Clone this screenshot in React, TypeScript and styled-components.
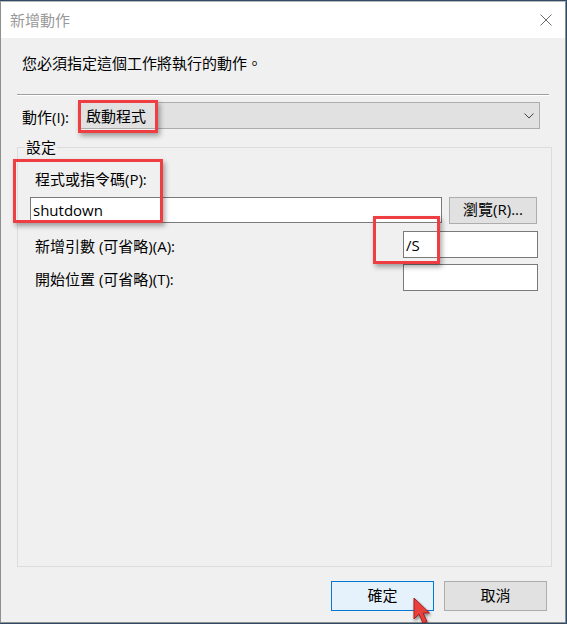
import React from "react";
import styled, { createGlobalStyle } from "styled-components";

const GlobalStyle = createGlobalStyle`
  html, body { margin: 0; padding: 0; background: #2d4b66; }
  body { font-family: "Open Sans", "Noto Sans CJK TC", sans-serif; }
  #root { padding-top: 1px; }
`;

const FONT = `"Open Sans", "Noto Sans CJK TC", sans-serif`;

const Window = styled.div`
  position: relative;
  width: 566px;
  height: 622px;
  box-sizing: border-box;
  border: 1px solid #8f8f8f;
  border-top-color: #b8b8b8;
  background: #f0f0f0;
  display: flex;
  flex-direction: column;
  font-family: ${FONT};
  font-size: 15px;
  line-height: 20px;
  color: #000;
`;

const TitleBar = styled.div`
  height: 36px;
  flex: none;
  background: #fff;
  display: flex;
  align-items: center;
  justify-content: space-between;
  padding: 0 13px 0 9px;
`;

const Title = styled.span`
  color: #999;
  font-size: 15px;
  padding-bottom: 1px;
`;

const Body = styled.div`
  flex: 1;
  min-height: 0;
  display: flex;
  flex-direction: column;
  padding: 15px 0 11px 16px;
`;

const Instruction = styled.div`
  margin-left: 5px;
`;

const Separator = styled.div`
  height: 0;
  border-top: 1px solid #a0a0a0;
  border-bottom: 1px solid #fff;
  margin: 21px 16px 0 0;
`;

const ActionRow = styled.div`
  display: flex;
  align-items: center;
  margin: 6px 25px 0 0;
`;

const ActionLabel = styled.span`
  width: 58px;
  margin-left: 5px;
  padding-top: 2px;
  flex: none;
`;

const ComboBox = styled.div`
  flex: 1;
  height: 27px;
  box-sizing: border-box;
  background: #e1e1e1;
  border: 1px solid #adadad;
  display: flex;
  align-items: center;
  justify-content: space-between;
  padding: 0 5px 0 5px;
`;

const Group = styled.fieldset`
  flex: 1;
  min-width: 0;
  margin: 8px 13px 0 0;
  padding: 0;
  border: 1px solid #dcdcdc;
  display: flex;
  flex-direction: column;
`;

const Legend = styled.legend`
  margin-left: 7px;
  padding: 0 1px;
  font-size: 15px;
  line-height: 20px;
`;

const GroupContent = styled.div`
  padding: 12px 13px 0 12px;
  display: flex;
  flex-direction: column;
`;

const FieldLabel = styled.span`
  margin-left: 5px;
`;

const PathRow = styled.div`
  display: flex;
  align-items: flex-start;
  gap: 7px;
  margin-top: 8px;
`;

const OptionRow = styled.div<{ $top: number }>`
  display: flex;
  align-items: center;
  margin-top: ${(p) => p.$top}px;
`;

const OptionLabel = styled.span`
  flex: 1;
  margin-left: 5px;
  padding-top: 2px;
`;

const TextBox = styled.input<{ $width?: number; $height: number }>`
  ${(p) => (p.$width ? `width: ${p.$width}px; flex: none;` : `flex: 1; min-width: 0;`)}
  height: ${(p) => p.$height}px;
  box-sizing: border-box;
  margin: 0;
  border: 1px solid #7a7a7a;
  background: #fff;
  padding: 0 2px;
  font-family: ${FONT};
  font-size: 15px;
  color: #000;
  outline: none;
`;

const Button = styled.button<{ $primary?: boolean; $width: number; $height: number }>`
  width: ${(p) => p.$width}px;
  height: ${(p) => p.$height}px;
  flex: none;
  box-sizing: border-box;
  margin: 0;
  padding: 0 0 3px;
  font-family: ${FONT};
  font-size: 15px;
  line-height: 20px;
  color: #000;
  background: ${(p) => (p.$primary ? "#e5f1fb" : "#e1e1e1")};
  border: 1px solid ${(p) => (p.$primary ? "#0078d7" : "#adadad")};
  border-radius: 0;
`;

const BrowseButton = styled(Button)`
  margin-right: 1px;
`;

const ButtonBar = styled.div`
  display: flex;
  justify-content: flex-end;
  gap: 10px;
  margin: 14px 18px 0 0;
`;

const Highlight = styled.div<{ $x: number; $y: number; $w: number; $h: number }>`
  position: absolute;
  left: ${(p) => p.$x}px;
  top: ${(p) => p.$y}px;
  width: ${(p) => p.$w}px;
  height: ${(p) => p.$h}px;
  box-sizing: border-box;
  border: 3px solid #ef3e42;
  box-shadow: 2px 3px 5px rgba(0, 0, 0, 0.35);
  pointer-events: none;
`;

const Cursor = styled.svg`
  position: absolute;
  left: 412px;
  top: 595px;
  filter: drop-shadow(1px 2px 1.5px rgba(0, 0, 0, 0.45));
`;

export default function App() {
  return (
    <>
      <GlobalStyle />
      <Window>
        <TitleBar>
          <Title>新增動作</Title>
          <svg width="12" height="12" viewBox="0 0 12 12">
            <path d="M0.5 0.5 L11.5 11.5 M11.5 0.5 L0.5 11.5" stroke="#6a6a6a" strokeWidth="1" fill="none" />
          </svg>
        </TitleBar>
        <Body>
          <Instruction>您必須指定這個工作將執行的動作。</Instruction>
          <Separator />
          <ActionRow>
            <ActionLabel>動作(I):</ActionLabel>
            <ComboBox>
              <span>啟動程式</span>
              <svg width="10" height="6" viewBox="0 0 10 6">
                <path d="M0.5 0.5 L5 5 L9.5 0.5" stroke="#444" strokeWidth="1" fill="none" />
              </svg>
            </ComboBox>
          </ActionRow>
          <Group>
            <Legend>設定</Legend>
            <GroupContent>
              <FieldLabel>程式或指令碼(P):</FieldLabel>
              <PathRow>
                <TextBox $height={26} defaultValue="shutdown" readOnly />
                <BrowseButton $width={88} $height={27}>瀏覽(R)...</BrowseButton>
              </PathRow>
              <OptionRow $top={7}>
                <OptionLabel>新增引數 (可省略)(A):</OptionLabel>
                <TextBox $width={135} $height={27} defaultValue="/S" readOnly />
              </OptionRow>
              <OptionRow $top={6}>
                <OptionLabel>開始位置 (可省略)(T):</OptionLabel>
                <TextBox $width={135} $height={27} defaultValue="" readOnly />
              </OptionRow>
            </GroupContent>
          </Group>
          <ButtonBar>
            <Button $primary $width={103} $height={30}>確定</Button>
            <Button $width={103} $height={30}>取消</Button>
          </ButtonBar>
        </Body>
        <Highlight $x={77} $y={98} $w={80} $h={33} />
        <Highlight $x={12} $y={157} $w={150} $h={64} />
        <Highlight $x={372} $y={214} $w={67} $h={48} />
        <Cursor width="22" height="28" viewBox="0 0 22 28">
          <polygon
            points="1,1 1,22 6,17 10,26 14,24.5 10,16 16.5,16"
            fill="#e8403c"
            stroke="#a81e1e"
            strokeWidth="1"
            strokeLinejoin="round"
          />
        </Cursor>
      </Window>
    </>
  );
}
